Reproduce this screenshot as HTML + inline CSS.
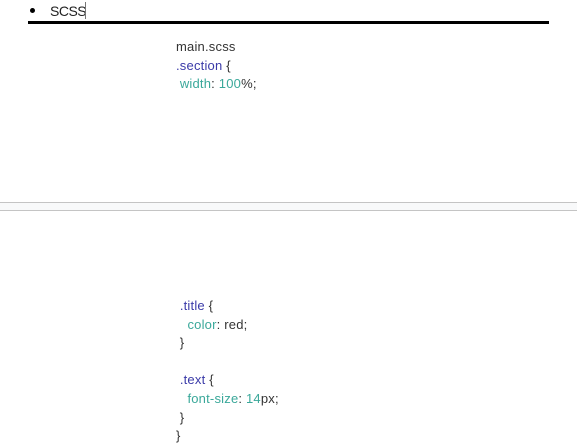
<!DOCTYPE html>
<html><head><style>
body{margin:0;width:577px;height:445px;background:#fff;font-family:"Liberation Sans",Arial,sans-serif;position:relative;overflow:hidden}
.a{position:absolute;white-space:pre;font-size:13px;letter-spacing:0.2px;color:#333;line-height:18.6px}
.k{color:#3a3aa8}.p{color:#3aa89a}
</style></head><body>
<div style="position:absolute;left:30px;top:8px;width:5px;height:5px;border-radius:50%;background:#000"></div>
<div class="a" style="left:50px;top:2px;font-size:14px;letter-spacing:-0.5px;color:#222;line-height:18px">SCSS</div>
<div style="position:absolute;left:85px;top:2px;width:1px;height:17px;background:#777"></div>
<div style="position:absolute;left:28px;top:21px;width:521px;height:3px;background:#000"></div>
<div class="a" style="left:176px;top:38px">main.scss
<span class="k">.section</span> {
 <span class="p">width</span>: <span class="p">100</span>%;</div>
<div style="position:absolute;left:0;top:202px;width:577px;background:#f8f9fa;border-top:1px solid #c4c4c4;border-bottom:1px solid #c4c4c4;box-sizing:border-box;height:9px"></div>
<div class="a" style="left:176px;top:297px"> <span class="k">.title</span> {
   <span class="p">color</span>: red;
 }

 <span class="k">.text</span> {
   <span class="p">font-size</span>: <span class="p">14</span>px;
 }
}</div>
</body></html>
